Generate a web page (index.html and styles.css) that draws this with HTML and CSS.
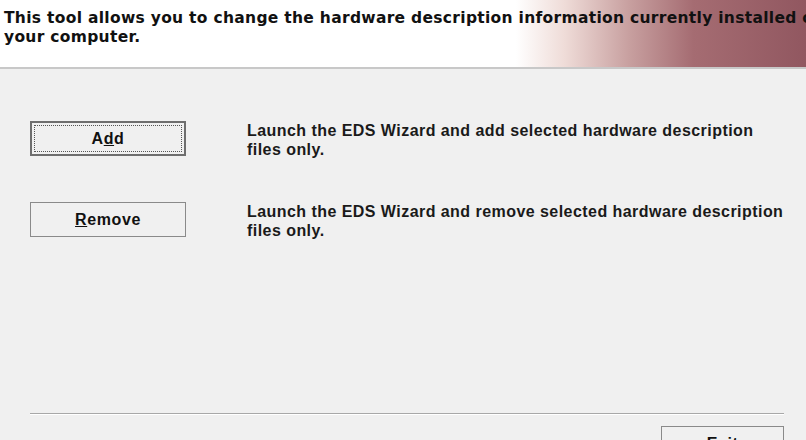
FILE: index.html
```html
<!DOCTYPE html>
<html lang="en">
<head>
    <meta charset="UTF-8">
    <title>Hardware Description Tool</title>
    <link rel="stylesheet" href="styles.css">
</head>
<body>
    <div class="header">
        <p>This tool allows you to change the hardware description information currently installed on your computer.</p>
    </div>
    <div class="content">
        <div class="row">
            <button class="btn btn-default"><span class="focus">A<u>d</u>d</span></button>
            <p class="desc">Launch the EDS Wizard and add selected hardware description files only.</p>
        </div>
        <div class="row">
            <button class="btn"><span class="focus-none"><u>R</u>emove</span></button>
            <p class="desc">Launch the EDS Wizard and remove selected hardware description files only.</p>
        </div>
    </div>
    <div class="footer">
        <div class="separator"></div>
        <div class="actions">
            <button class="btn btn-exit"><span class="focus-none">Exit</span></button>
        </div>
    </div>
</body>
</html>
```

FILE: styles.css
```css
html, body {
    margin: 0;
    height: 440px;
    overflow: hidden;
}
body {
    background: #f0f0f0;
    font-family: "Liberation Sans", Arial, sans-serif;
    color: #1a1a1a;
    display: flex;
    flex-direction: column;
}
.header {
    height: 67px;
    background: linear-gradient(to right, #ffffff 0%, #ffffff 64%, #efdcd8 70%, #c8a0a0 78%, #a56c72 86%, #915760 100%);
    border-bottom: 2px solid #c8c8c8;
    padding: 0 0 0 4px;
    box-sizing: content-box;
    overflow: hidden;
}
.header p {
    margin: 9px 0 0 0;
    font-family: "DejaVu Sans", Verdana, sans-serif;
    font-weight: bold;
    font-size: 15.5px;
    letter-spacing: 0.3px;
    line-height: 19px;
    width: 860px;
    color: #111;
}
.content {
    padding: 52px 22px 0 30px;
    display: flex;
    flex-direction: column;
    gap: 43px;
}
.row {
    display: flex;
    align-items: flex-start;
    gap: 61px;
}
.btn {
    width: 156px;
    height: 35px;
    flex: none;
    background: #f0f0f0;
    border: 1px solid #8a8a8a;
    font-family: "Liberation Sans", Arial, sans-serif;
    font-weight: bold;
    font-size: 16px;
    letter-spacing: 0.6px;
    color: #111;
    padding: 0;
    margin: 0;
    display: flex;
    align-items: stretch;
    justify-content: stretch;
}
.btn-default {
    border: 2px solid #6e6e6e;
    padding: 2px;
}
.focus {
    flex: 1;
    border: 1px dotted #555;
    display: flex;
    align-items: center;
    justify-content: center;
}
.focus-none {
    flex: 1;
    display: flex;
    align-items: center;
    justify-content: center;
}
.desc {
    margin: 0;
    font-weight: bold;
    font-size: 16px;
    line-height: 19px;
    letter-spacing: 0.45px;
    color: #1a1a1a;
}
.footer {
    margin-top: auto;
    padding: 0 22px 0 30px;
}
.separator {
    border-top: 1px solid #a8a8a8;
    border-bottom: 1px solid #ffffff;
}
.actions {
    display: flex;
    justify-content: flex-end;
    padding-top: 11px;
    height: 14px;
}
.btn-exit {
    width: 123px;
    height: 35px;
}
```
